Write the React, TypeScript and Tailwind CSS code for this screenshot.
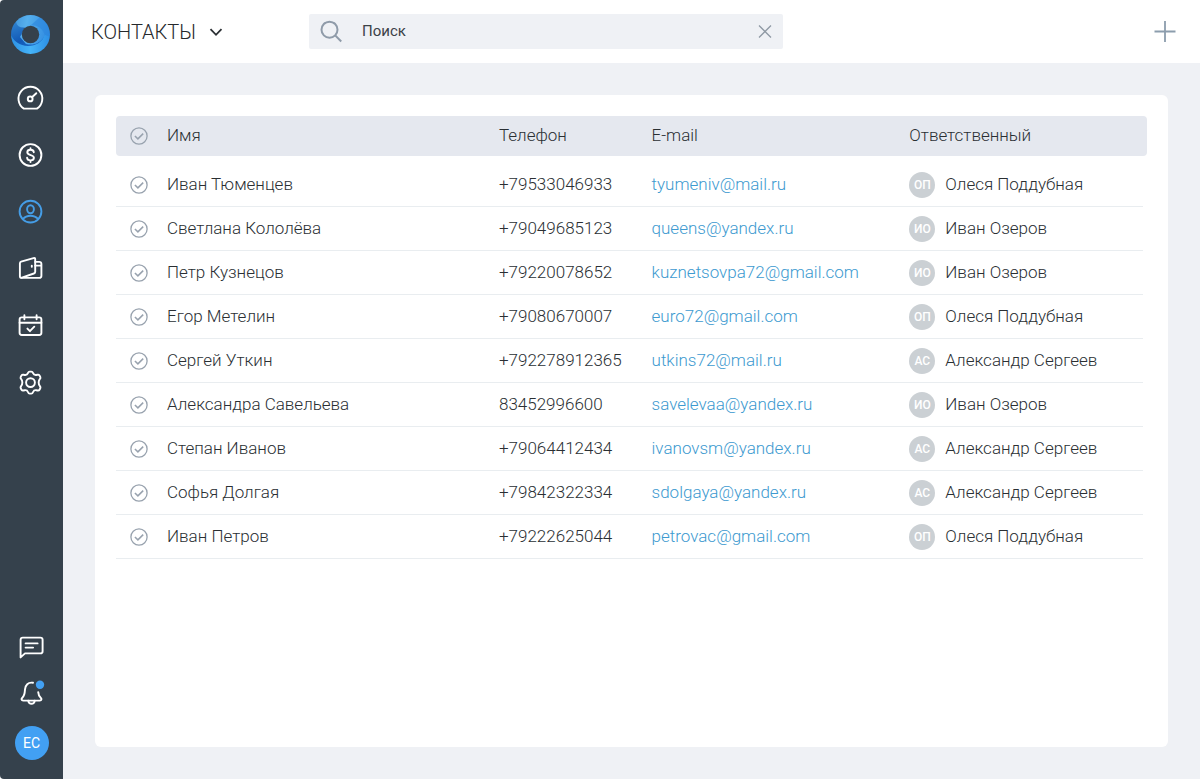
import * as React from "react"
import { clsx } from "clsx"

type Contact = {
  name: string
  phone: string
  email: string
  owner: string
  initials: string
}

const contacts: Contact[] = [
  { name: "Иван Тюменцев", phone: "+79533046933", email: "tyumeniv@mail.ru", owner: "Олеся Поддубная", initials: "ОП" },
  { name: "Светлана Кололёва", phone: "+79049685123", email: "queens@yandex.ru", owner: "Иван Озеров", initials: "ИО" },
  { name: "Петр Кузнецов", phone: "+79220078652", email: "kuznetsovpa72@gmail.com", owner: "Иван Озеров", initials: "ИО" },
  { name: "Егор Метелин", phone: "+79080670007", email: "euro72@gmail.com", owner: "Олеся Поддубная", initials: "ОП" },
  { name: "Сергей Уткин", phone: "+792278912365", email: "utkins72@mail.ru", owner: "Александр Сергеев", initials: "АС" },
  { name: "Александра Савельева", phone: "83452996600", email: "savelevaa@yandex.ru", owner: "Иван Озеров", initials: "ИО" },
  { name: "Степан Иванов", phone: "+79064412434", email: "ivanovsm@yandex.ru", owner: "Александр Сергеев", initials: "АС" },
  { name: "Софья Долгая", phone: "+79842322334", email: "sdolgaya@yandex.ru", owner: "Александр Сергеев", initials: "АС" },
  { name: "Иван Петров", phone: "+79222625044", email: "petrovac@gmail.com", owner: "Олеся Поддубная", initials: "ОП" },
]

function Icon({ children }: { children: React.ReactNode }) {
  return (
    <svg
      viewBox="0 0 28 28"
      className="h-7 w-7"
      fill="none"
      stroke="currentColor"
      strokeWidth="1.9"
      strokeLinecap="round"
      strokeLinejoin="round"
      aria-hidden
    >
      {children}
    </svg>
  )
}

const navItems = [
  {
    label: "Показатели",
    icon: (
      <Icon>
        <path d="M7.9 24.6A11.9 11.9 0 1 1 20.9 24.6Z" />
        <circle cx="14.2" cy="14.9" r="2.4" />
        <path d="m16 13.2 4.3-4" />
      </Icon>
    ),
  },
  {
    label: "Сделки",
    icon: (
      <Icon>
        <circle cx="14.5" cy="14" r="10.9" />
        <path d="M17.8 11.2c-.2-1.6-1.5-2.5-3.3-2.5s-3.2.9-3.2 2.5c0 3.7 6.6 2 6.6 5.6 0 1.6-1.5 2.6-3.4 2.6s-3.3-1-3.4-2.7M14.5 7.2v1.5M14.5 19.4V21" />
      </Icon>
    ),
  },
  {
    label: "Контакты",
    active: true,
    icon: (
      <Icon>
        <circle cx="14.5" cy="13.6" r="10.9" />
        <ellipse cx="14.5" cy="11.2" rx="3.4" ry="4" />
        <path d="M6.9 21c1.9-2.2 4.6-3.3 7.6-3.3s5.7 1.1 7.6 3.3" />
      </Icon>
    ),
  },
  {
    label: "Касса",
    icon: (
      <Icon>
        <path d="M5.1 6.7 17.5 3.1q1.7-.5 1.7 1.2v12.4q0 1.400-1.300 1.800L5.900 22.700q-2 .5-2-1.400V8.400q0-1.300 1.200-1.700Z" />
        <path d="M19.2 6.900h4q2.200 0 2.200 2.200v11.600q0 2.200-2.200 2.200H5.900M19.2 10.600h6.200" />
        <path d="M15.800 10.800v.9" />
      </Icon>
    ),
  },
  {
    label: "Календарь",
    icon: (
      <Icon>
        <rect x="3.6" y="5.4" width="21.8" height="17.6" rx="2.2" />
        <path d="M3.6 10.8h21.8M8.4 3.2v4M20.6 3.2v4M11.4 16.6l2.5 2.6 4.4-4.5" />
      </Icon>
    ),
  },
  {
    label: "Настройки",
    icon: (
      <Icon>
        <path d="M11.9 4.2Q12.5 2.6 13.7 2.6h1.6q1.2 0 1.8 1.6c.6 1.6 1.5 2 3.1 1.8l1.4-.3q1.3-.2 1.9.8l.8 1.4q.6 1.1-.5 2.3c-1.5 1.8-1.5 5 0 6.8q1.1 1.2.5 2.3l-.8 1.4q-.6 1-1.9.8l-1.4-.3c-1.6-.2-2.5.2-3.1 1.8q-.6 1.6-1.8 1.6h-1.6q-1.2 0-1.8-1.6c-.6-1.6-1.5-2-3.1-1.8l-1.4.3q-1.3.2-1.9-.8l-.8-1.4q-.6-1.1.5-2.3c1.5-1.8 1.5-5 0-6.8q-1.1-1.2-.5-2.3L5.5 6.5q.6-1 1.9-.8l1.4.3c1.6.2 2.5-.2 3.1-1.8Z" />
        <circle cx="14.5" cy="13.6" r="4.4" />
      </Icon>
    ),
  },
]

function Logo() {
  return (
    <svg viewBox="0 0 40 40" className="h-10 w-10" aria-hidden>
      <defs>
        <linearGradient id="ring" x1="0" y1="0.2" x2="1" y2="0.4">
          <stop offset="0" stopColor="#3c8fd8" />
          <stop offset="0.4" stopColor="#56b0ee" />
          <stop offset="1" stopColor="#2f8ae0" />
        </linearGradient>
        <linearGradient id="left" x1="0.1" y1="0" x2="0.5" y2="1">
          <stop offset="0" stopColor="#2f83d0" />
          <stop offset="0.6" stopColor="#1259b6" />
          <stop offset="1" stopColor="#1b6fcc" />
        </linearGradient>
        <linearGradient id="bottom" x1="0" y1="0" x2="1" y2="0">
          <stop offset="0" stopColor="#2b8fe4" />
          <stop offset="0.5" stopColor="#46b4f8" />
          <stop offset="1" stopColor="#2a8ce4" />
        </linearGradient>
        <mask id="hole">
          <circle cx="20.5" cy="19.5" r="19.5" fill="#fff" />
          <circle cx="20.5" cy="19.5" r="8.7" fill="#000" />
        </mask>
      </defs>
      <g mask="url(#hole)">
        <path d="M0 0h40v40H0Z" fill="url(#ring)" />
        <path d="M20 11c8-2 15 4 16 14l5-6V4L30 2Z" fill="#2b86de" opacity="0.6" />
        <path d="M0 8 6 7c1 4 4 6 9 5.500L10 22l6 7c8 2 14-1 18-7l-4 10-14 6L0 32Z" fill="url(#left)" />
        <path d="M0 18c3 8 10 13 18 13 8 0 14-4 17-11l6 2-3 18H0Z" fill="url(#bottom)" />
      </g>
    </svg>
  )
}

function Sidebar() {
  return (
    <aside className="flex w-[63px] shrink-0 flex-col items-center justify-between rounded-l-sm bg-[#35414c] pt-[15px] pb-[19px] text-white">
      <nav className="flex flex-col items-center gap-[29px] pr-[3px]">
        <a href="#home" aria-label="Главная">
          <Logo />
        </a>
        {navItems.map((item) => (
          <a
            key={item.label}
            href="#section"
            aria-label={item.label}
            aria-current={item.active ? "page" : undefined}
            className={item.active ? "text-[#459de6]" : "text-white"}
          >
            {item.icon}
          </a>
        ))}
      </nav>
      <div className="flex flex-col items-center gap-[18px]">
        <button type="button" aria-label="Сообщения">
          <Icon>
            <path d="M2.600 23.400V5.800q0-2.200 2.200-2.200h17.600Q24.600 3.600 24.600 5.800v11.400q0 2.200-2.200 2.200H7Z" />
            <path d="M7.6 9.4h12M7.6 13.6h7.5" />
          </Icon>
        </button>
        <button type="button" aria-label="Уведомления">
          <Icon>
            <path d="M15 2.8C10 1.9 7.3 5.2 7 9.4c-.2 4.2-.5 6.5-2.7 8.3-1.2 1-1 2.9.9 2.9h16.6c1.9 0 2.1-1.9.9-2.9-1.7-1.4-2.3-3-2.5-5.5" />
            <path d="M10.3 20.8c.3 1.9 1.5 3 3.2 3s2.900-1.100 3.200-3" />
            <circle cx="22" cy="4.7" r="4.2" fill="#42a0f3" stroke="none" />
          </Icon>
        </button>
        <button
          type="button"
          className="flex h-[34px] w-[34px] items-center justify-center rounded-full bg-[#42a0f3] text-sm"
        >
          ЕС
        </button>
      </div>
    </aside>
  )
}

function TopBar() {
  return (
    <header className="flex h-[63px] items-center bg-white pr-6 pl-7">
      <div className="w-[218px] shrink-0">
        <button type="button" className="flex items-center gap-3 text-xl font-light text-[#26292c]">
          КОНТАКТЫ
          <svg viewBox="0 0 16 16" className="h-4 w-4" fill="none" stroke="#2b2f33" strokeWidth="1.8" aria-hidden>
            <path d="m2.5 5.2 5.5 5.6 5.5-5.6" />
          </svg>
        </button>
      </div>
      <div className="flex h-[35px] max-w-[474px] flex-1 items-center rounded-xs bg-[#eff1f5] px-[11px]">
        <svg viewBox="0 0 24 24" className="h-6 w-6 shrink-0" fill="none" stroke="#8f9ba9" strokeWidth="2" aria-hidden>
          <circle cx="9.5" cy="9.7" r="8" />
          <path d="m15.2 15.4 6 6.1" />
        </svg>
        <input
          type="text"
          aria-label="Поиск"
          placeholder="Поиск"
          className="ml-[18px] min-w-0 flex-1 bg-transparent text-[15px] text-[#3c4248] outline-none placeholder:text-[#3c4248]"
        />
        <button type="button" aria-label="Очистить">
          <svg viewBox="0 0 14 14" className="h-[14px] w-[14px]" fill="none" stroke="#8f99a4" strokeWidth="1.3" aria-hidden>
            <path d="m1 .5 12 12M13 .5l-12 12" />
          </svg>
        </button>
      </div>
      <button type="button" aria-label="Добавить" className="ml-auto">
        <svg viewBox="0 0 22 22" className="h-[22px] w-[22px]" fill="none" stroke="#8c9dad" strokeWidth="1.8" aria-hidden>
          <path d="M11 0v21M.5 10.5h21" />
        </svg>
      </button>
    </header>
  )
}

function RoundCheck({ label }: { label: string }) {
  return (
    <label className="ml-[14px] grid h-[18px] w-[18px] text-[#98a2ae] has-checked:text-[#459de6]">
      <input type="checkbox" aria-label={label} className="col-start-1 row-start-1 appearance-none" />
      <svg
        viewBox="0 0 18 18"
        className="pointer-events-none col-start-1 row-start-1 h-[18px] w-[18px]"
        fill="none"
        stroke="currentColor"
        strokeWidth="1.3"
        aria-hidden
      >
        <circle cx="9" cy="9" r="8.1" />
        <path d="m4.9 9 3 2.900 5.300-5.300" strokeWidth="1.5" />
      </svg>
    </label>
  )
}

function Cell({ children, last }: { children: React.ReactNode; last?: boolean }) {
  return (
    <td className={clsx("p-0", last && "pr-1")}>
      <div className="flex h-11 items-center border-b border-[#e9edf0] whitespace-nowrap">{children}</div>
    </td>
  )
}

function ContactsTable() {
  return (
    <table className="w-full table-fixed text-[17px] font-light text-[#2a2f33]">
      <colgroup>
        <col className="w-[51px]" />
        <col className="w-[32.2%]" />
        <col className="w-[14.8%]" />
        <col className="w-[25%]" />
        <col />
      </colgroup>
      <thead>
        <tr className="h-10 text-left [&>th]:bg-[#e5e8ef] [&>th]:p-0 [&>th]:font-light">
          <th className="rounded-l-sm">
            <RoundCheck label="Выбрать все" />
          </th>
          <th>Имя</th>
          <th>Телефон</th>
          <th>E-mail</th>
          <th className="rounded-r-sm">Ответственный</th>
        </tr>
      </thead>
      <tbody className="before:block before:h-[7px]">
        {contacts.map((contact) => (
          <tr key={contact.email}>
            <Cell>
              <RoundCheck label={contact.name} />
            </Cell>
            <Cell>{contact.name}</Cell>
            <Cell>{contact.phone}</Cell>
            <Cell>
              <a href={`mailto:${contact.email}`} className="text-[#3d9ad0]">
                {contact.email}
              </a>
            </Cell>
            <Cell last>
              <span className="mr-[10px] flex h-[26px] w-[26px] items-center justify-center rounded-full bg-[#cbd0d4] text-xs font-medium text-white">
                {contact.initials}
              </span>
              {contact.owner}
            </Cell>
          </tr>
        ))}
      </tbody>
    </table>
  )
}

export default function App() {
  return (
    <div className="flex min-h-screen bg-white font-[Roboto,sans-serif]">
      <Sidebar />
      <div className="flex min-w-0 flex-1 flex-col bg-[#eff1f5]">
        <TopBar />
        <main className="flex flex-1 p-8">
          <section className="min-w-0 flex-1 rounded-md bg-white p-[21px]">
            <ContactsTable />
          </section>
        </main>
      </div>
    </div>
  )
}
